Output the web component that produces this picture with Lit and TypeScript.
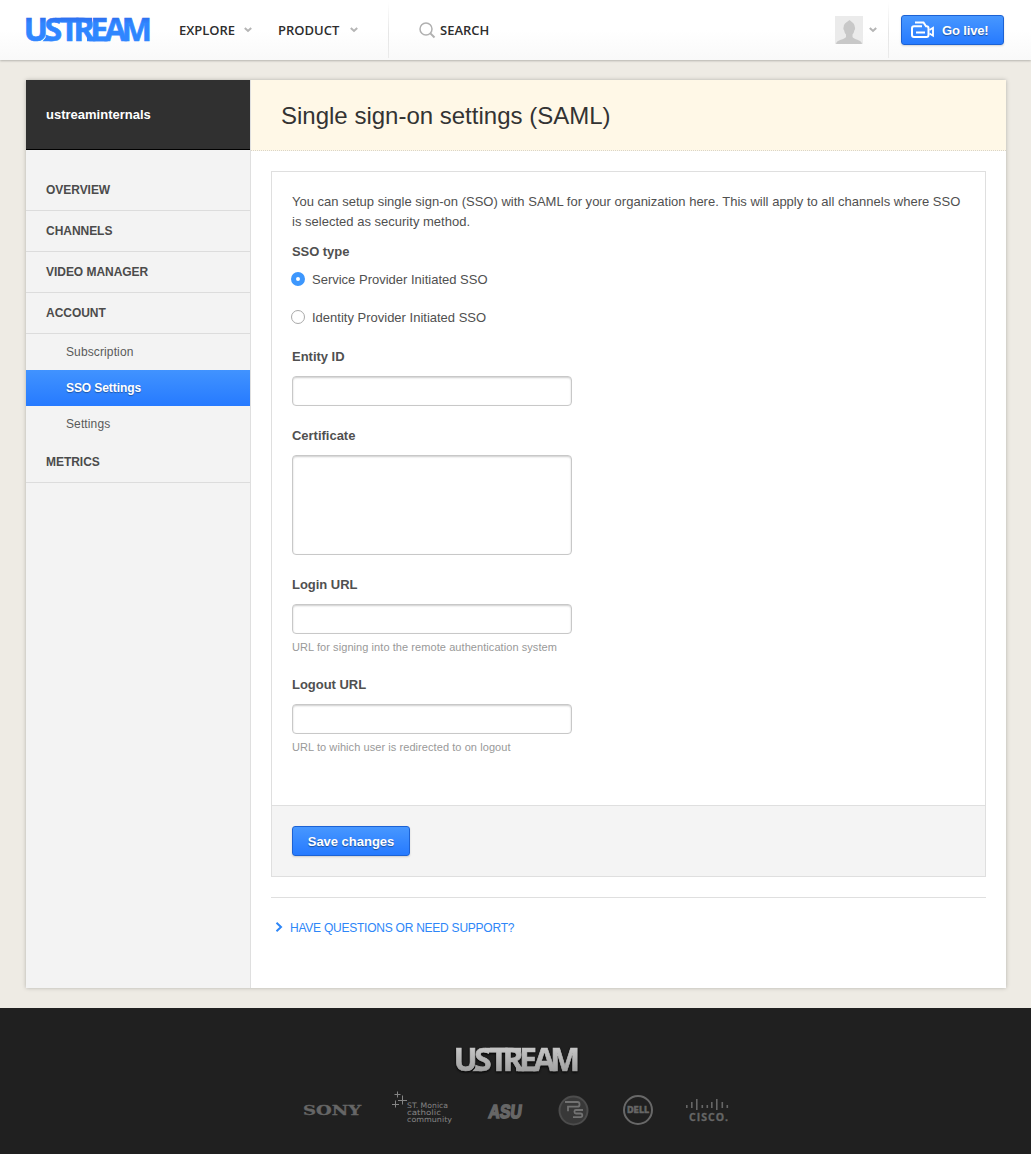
import { LitElement, html, css, svg } from "lit";
import { customElement, property, state } from "lit/decorators.js";
import { classMap } from "lit/directives/class-map.js";

/** Wordmark set from overlapping letters, joined by bars at cap height and baseline. */
@customElement("brand-mark")
class BrandMark extends LitElement {
  @property() tone = "blue";

  static styles = css`
    :host { display: block; width: 126px; height: 26px; }
    svg { display: block; overflow: visible; }
    .letter { font: 700 32px "Open Sans", sans-serif; stroke: url(#g); stroke-width: 0.7px; }
    .silver { filter: drop-shadow(0 1px 1px #000); }
  `;

  render() {
    const blue = this.tone === "blue";
    return html`<svg class=${blue ? "" : "silver"} width="126" height="26" viewBox="0 0 126 26">
      <defs>
        <linearGradient id="g" gradientUnits="userSpaceOnUse" x1="0" y1="1" x2="0" y2="25">
          <stop offset="0" stop-color=${blue ? "#2d70f0" : "#c6c6c6"}></stop>
          <stop offset=".22" stop-color=${blue ? "#3086ff" : "#bdbdbd"}></stop>
          <stop offset="1" stop-color=${blue ? "#3086ff" : "#a0a0a0"}></stop>
        </linearGradient>
      </defs>
      <g fill="url(#g)" transform=${blue ? "" : "scale(.985 1)"}>
        <text class="letter" y="24" x="-1.2 19.6 35.2 48.6 65.2 79.600 96.800">USTREAM</text>
        <path d="M30 .8h37v4.400H30zM62 19.800h21v4.500H62zM17.500 24.200l4-4.400h6v4.400z"></path>
      </g>
    </svg>`;
  }
}

@customElement("form-field")
class FormField extends LitElement {
  @property() label = "";
  @property() hint = "";
  @property({ type: Boolean }) multiline = false;

  static styles = css`
    :host { display: block; }
    .label { display: block; font-weight: 700; line-height: 20px; margin-bottom: 9px; letter-spacing: -0.02px; }
    .box {
      display: block; box-sizing: border-box; width: 280px; height: 30px; margin: 0; padding: 5px 8px;
      border: 1px solid #c8c8c8; border-radius: 4px; background: #fff; resize: none; outline: none;
      font: inherit; color: inherit; box-shadow: inset 0 1px 2px rgba(0, 0, 0, 0.2);
    }
    .tall { height: 100px; }
    .hint { line-height: 16px; margin-top: 5px; font-size: 11px; color: #999; letter-spacing: 0.07px; }
  `;

  render() {
    return html`
      <label class="label">${this.label}</label>
      ${this.multiline ? html`<textarea class="box tall"></textarea>` : html`<input class="box" type="text" />`}
      ${this.hint ? html`<div class="hint">${this.hint}</div>` : ""}
    `;
  }
}

@customElement("partner-logos")
class PartnerLogos extends LitElement {
  static styles = css`
    :host { display: block; }
    svg { display: block; }
    .sony { font: 700 12.5px "DejaVu Serif", serif; }
    .parish { font: 400 7.5px "DejaVu Sans", sans-serif; }
    .asu { font: 700 19px "Liberation Sans", sans-serif; }
    .dell { font: 700 9px "DejaVu Sans", sans-serif; }
    .cisco { font: 700 10.5px "Open Sans", sans-serif; }
  `;

  render() {
    const bars: [number, number, number][] = [
      [686, 1105, 3], [691, 1102, 6], [696, 1099, 11], [701.500, 1105, 3], [706.500, 1105, 3],
      [711, 1102, 6], [716, 1099, 11], [721.500, 1102, 6], [726.500, 1105, 3],
    ];
    return html`<svg width="431" height="40" viewBox="300 1090 431 40" fill="#666">
      <text class="sony" x="303" y="1114.500" textLength="58" lengthAdjust="spacingAndGlyphs" stroke="#666" stroke-width=".3">SONY</text>
      <path d="M397.500 1091.500v6M394.500 1094.500h6M402.500 1095.500v9M398 1100.500h9M395.500 1100.500v7M392 1104.500h7" stroke="#858585" fill="none"></path>
      <g class="parish" fill="#858585">
        <text x="407" y="1108" textLength="41" lengthAdjust="spacingAndGlyphs">ST. Monica</text>
        <text x="407" y="1115" textLength="34" lengthAdjust="spacingAndGlyphs">catholic</text>
        <text x="407" y="1122" textLength="45" lengthAdjust="spacingAndGlyphs">community</text>
      </g>
      <text class="asu" transform="translate(488 1117.500) skewX(-7)" textLength="33" lengthAdjust="spacingAndGlyphs" stroke="#666" stroke-width="1.600">ASU</text>
      <circle cx="573.500" cy="1110.500" r="14" fill="#383838" stroke="#4c4c4c" stroke-width="2"></circle>
      <path d="M565 1102h12.500q2 0 2 2v.7q0 2-2 2H568v4.500M583 1110h-7q-1.500 0-1.500 1.300v.7q0 1.500 1.500 1.500h4.500q1.800 0 1.800 1.800t-1.800 1.800H573" fill="none" stroke="#727272" stroke-width="1.800"></path>
      <circle cx="638" cy="1110" r="14" fill="none" stroke="#686868" stroke-width="2"></circle>
      <text class="dell" x="627" y="1113" textLength="22" lengthAdjust="spacingAndGlyphs" stroke="#666" stroke-width=".6">DELL</text>
      ${bars.map(([x, y, h]) => svg`<rect x=${x} y=${y} width="1.600" height=${h}></rect>`)}
      <text class="cisco" x="689" y="1121" textLength="39" lengthAdjust="spacing" stroke="#666" stroke-width=".3">CISCO.</text>
    </svg>`;
  }
}

@customElement("app-root")
class AppRoot extends LitElement {
  @state() private ssoType = 0;

  static styles = css`
    :host { display: block; background: #eeebe4; color: #505050; font: 13px/20px "Liberation Sans", Arial, sans-serif; }
    .header {
      display: flex; align-items: center; box-sizing: border-box; height: 60px; padding: 0 27px 0 25px;
      background: linear-gradient(#fff 50%, #f9f9f9); box-shadow: 0 1px 2px rgba(0, 0, 0, 0.24);
    }
    .nav { display: flex; align-items: center; font: 600 13px/20px "Open Sans", sans-serif; color: #2d2d2d; }
    .explore { margin-left: 28px; width: 56px; letter-spacing: -0.05px; }
    .product { margin-left: 26px; width: 62px; }
    .chev { display: block; fill: none; stroke: #b5b5b5; stroke-width: 2; }
    .explore-chev { margin-left: 9px; }
    .product-chev { margin-left: 10px; }
    .rule { width: 1px; height: 56px; background: linear-gradient(rgba(230, 230, 230, 0), #e6e6e6 55%, #ebebeb); }
    .nav-rule { margin-left: 30px; }
    .lens { display: block; margin: 0 4px 0 30px; }
    .account { display: flex; align-items: center; margin-left: auto; }
    .avatar { display: block; margin-right: 6px; }
    .account-rule { margin: 0 12px 0 11px; }
    .button {
      display: flex; align-items: center; box-sizing: border-box; height: 30px; margin: 0; padding: 1px 0 0;
      border: 1px solid #1c62d4; border-radius: 3px; background: linear-gradient(#4797ff, #267aff); color: #fff;
      font: 700 13px/20px "Liberation Sans", Arial, sans-serif; letter-spacing: -0.02px;
      text-shadow: 0 1px 1px rgba(0, 0, 0, 0.4); box-shadow: 0 1px 2px rgba(0, 0, 0, 0.16);
    }
    .live { width: 103px; gap: 7px; padding-left: 9px; letter-spacing: -0.15px; }
    .camera { margin-bottom: 2px; }
    .save { width: 118px; justify-content: center; }
    .card {
      display: flex; width: 980px; min-height: 908px; margin: 20px auto 20px 26px;
      background: #fff; box-shadow: 0 0 4px rgba(0, 0, 0, 0.25);
    }
    .side { width: 224px; flex: none; background: #f3f3f3; border-right: 1px solid #dfdfdf; }
    .owner {
      display: flex; align-items: center; box-sizing: border-box; height: 70px; padding-left: 20px; margin-bottom: 20px;
      background: #303030; border-bottom: 1px solid #000; color: #fff; font-weight: 700; letter-spacing: 0;
    }
    .item {
      box-sizing: border-box; height: 41px; padding: 10px 20px; border-bottom: 1px solid #dcdcdc;
      font-weight: 700; font-size: 12px; color: #4b4b4b; letter-spacing: -0.04px;
    }
    .sub { box-sizing: border-box; height: 36px; padding: 8px 40px; font-size: 12px; color: #5a5a5a; letter-spacing: 0.12px; }
    .active {
      background: linear-gradient(#4193ff, #267aff); color: #fff; font-weight: 700; letter-spacing: -0.08px;
      text-shadow: 0 1px 1px rgba(0, 0, 0, 0.35);
    }
    .main { flex: 1; min-width: 0; }
    .title {
      box-sizing: border-box; height: 71px; margin: 0; padding: 21px 30px; background: #fff8e7;
      border-bottom: 1px dotted #d9d5ca; font-size: 24px; line-height: 30px; font-weight: 400; color: #333;
    }
    .panel { margin: 20px 20px 0; border: 1px solid #dfdfdf; }
    .form { box-sizing: border-box; height: 633px; padding: 20px; }
    .intro { margin: 0 0 10px; white-space: nowrap; letter-spacing: 0.01px; }
    .group { font-weight: 700; letter-spacing: -0.06px; margin-bottom: 8px; }
    .option { display: flex; align-items: center; gap: 7px; height: 20px; margin: 0 0 18px -1px; }
    .dot {
      box-sizing: border-box; width: 14px; height: 14px; margin-bottom: 2px; border: 1px solid #a9a9a9; border-radius: 50%; background: #fff;
    }
    .picked { border: 5px solid #3d97fd; }
    .fields { display: flex; flex-direction: column; gap: 20px; margin-top: 19px; }
    .actions { padding: 20px; background: #f4f4f4; border-top: 1px solid #dfdfdf; }
    .support { margin: 20px 20px 0; padding: 20px 4px; border-top: 1px solid #dfdfdf; }
    .link { display: flex; align-items: center; gap: 6px; font-size: 12px; color: #2d86f8; letter-spacing: -0.24px; }
    .arrow { margin-bottom: 2px; }
    .footer {
      display: flex; flex-direction: column; align-items: center; box-sizing: border-box; height: 146px; padding-top: 39px; background: #202020;
    }
    .footer-mark { margin: 0 0 17px 5px; }
  `;

  private chevron(cls: string) {
    return html`<svg class="chev ${cls}" width="8" height="6" viewBox="0 0 8 6"><path d="M.8 1l3.200 3 3.200-3"></path></svg>`;
  }

  render() {
    return html`
      <header class="header">
        <brand-mark></brand-mark>
        <nav class="nav">
          <span class="explore">EXPLORE</span>${this.chevron("explore-chev")}
          <span class="product">PRODUCT</span>${this.chevron("product-chev")}
          <span class="rule nav-rule"></span>
          <svg class="lens" width="17" height="17" viewBox="0 0 17 17" fill="none" stroke="#b0b0b0">
            <circle cx="7" cy="7" r="6" stroke-width="1.500"></circle><path d="M11.400 11.400l4.100 4.100" stroke-width="2"></path>
          </svg>
          <span>SEARCH</span>
        </nav>
        <div class="account">
          <svg class="avatar" width="28" height="28" viewBox="0 0 28 28">
            <rect width="28" height="28" fill="#ebebeb"></rect>
            <path d="M14.500 4c1 1.500 5.200 2.500 5.300 7 .6 1 .3 2.500-.5 3.500-.3 2-1 3-1.800 4v2.500c1 2.500 9 2.500 9.500 7H1c.5-4.500 9-4.500 10-7v-2.500c-.8-1-1.500-2-1.800-4-.8-1-1.100-2.500-.5-3.500.1-4.500 4.800-5.500 5.800-7z" fill="#c8c8c8"></path>
          </svg>
          ${this.chevron("")}
          <span class="rule account-rule"></span>
          <button class="button live">
            <svg class="camera" width="24" height="18" viewBox="0 0 24 18" fill="none" stroke="#fff" stroke-width="2">
              <path d="M4 1.500h8.500l2.500 3.800h.5q2 0 2 2v6.700q0 2-2 2H3q-2 0-2-2V7.300q0-2 2-2h8M5 11.500h9"></path>
              <path d="M18.500 9l3.500-2.200v7.900L18.500 12.500" stroke-width="1.800"></path>
            </svg>
            <span>Go live!</span>
          </button>
        </div>
      </header>
      <div class="card">
        <aside class="side">
          <div class="owner">ustreaminternals</div>
          <div class="item">OVERVIEW</div>
          <div class="item">CHANNELS</div>
          <div class="item">VIDEO MANAGER</div>
          <div class="item">ACCOUNT</div>
          <div class="sub">Subscription</div>
          <div class="sub active">SSO Settings</div>
          <div class="sub">Settings</div>
          <div class="item">METRICS</div>
        </aside>
        <main class="main">
          <h1 class="title">Single sign-on settings (SAML)</h1>
          <section class="panel">
            <div class="form">
              <p class="intro">You can setup single sign-on (SSO) with SAML for your organization here. This will apply to all channels where SSO<br />is selected as security method.</p>
              <div class="group">SSO type</div>
              ${["Service Provider Initiated SSO", "Identity Provider Initiated SSO"].map((name, i) => html`
                <div class="option" @click=${() => (this.ssoType = i)}>
                  <span class=${classMap({ dot: true, picked: this.ssoType === i })}></span><span>${name}</span>
                </div>`)}
              <div class="fields">
                <form-field label="Entity ID"></form-field>
                <form-field label="Certificate" multiline></form-field>
                <form-field label="Login URL" hint="URL for signing into the remote authentication system"></form-field>
                <form-field label="Logout URL" hint="URL to wihich user is redirected to on logout"></form-field>
              </div>
            </div>
            <div class="actions"><button class="button save">Save changes</button></div>
          </section>
          <div class="support">
            <a class="link">
              <svg class="arrow" width="9" height="10" viewBox="0 0 9 10" fill="none" stroke="#2d86f8" stroke-width="2"><path d="M1.500.8L6 5 1.500 9.200"></path></svg>
              HAVE QUESTIONS OR NEED SUPPORT?
            </a>
          </div>
        </main>
      </div>
      <footer class="footer">
        <brand-mark class="footer-mark" tone="silver"></brand-mark>
        <partner-logos></partner-logos>
      </footer>
    `;
  }
}
